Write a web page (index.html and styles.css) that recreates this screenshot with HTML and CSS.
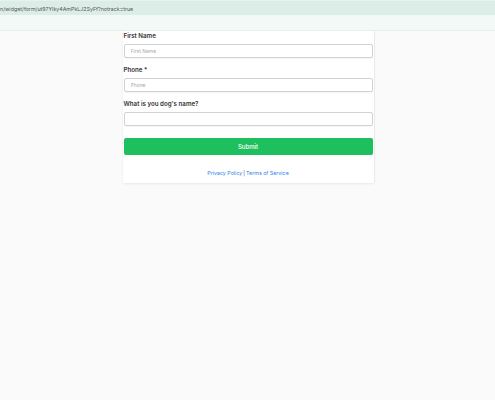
FILE: index.html
```html
<!DOCTYPE html>
<html lang="en">
<head>
    <meta charset="UTF-8">
    <meta name="viewport" content="width=device-width, initial-scale=1.0">
    <title>Form</title>
    <link rel="stylesheet" href="styles.css">
</head>
<body>

    <!-- Address bar -->
    <div class="url-bar">n/widget/form/ut97Ylky4AmPkLJ2SyFf?notrack=true</div>
    <div class="sub-bar"></div>

    <div class="page">
        <form class="card">
            <div class="form-group">
                <label for="firstName">First Name</label>
                <input type="text" id="firstName" placeholder="First Name">
            </div>

            <div class="form-group">
                <label for="phone">Phone *</label>
                <input type="text" id="phone" placeholder="Phone">
            </div>

            <div class="form-group">
                <label for="dogName">What is you dog's name?</label>
                <input type="text" id="dogName">
            </div>

            <button type="button" class="submit-btn">Submit</button>

            <div class="links">
                <a href="#">Privacy Policy</a><span class="sep">|</span><a href="#">Terms of Service</a>
            </div>
        </form>
    </div>

</body>
</html>
```

FILE: styles.css
```css
body {
    margin: 0;
    padding: 0;
    font-family: Inter, 'Noto Sans', sans-serif;
    background-color: #fafafa;
    min-height: 100vh;
}

/* Top bars */
.url-bar {
    height: 15px;
    line-height: 16px;
    background-color: #dcede8;
    border-top: 1px solid #e6f2ee;
    box-sizing: border-box;
    font-size: 5.3px;
    color: #555;
    white-space: nowrap;
    overflow: hidden;
}

.sub-bar {
    height: 15px;
    background-color: #f2f9f7;
    border-bottom: 1px solid #e8efed;
}

/* Card */
.page {
    display: flex;
    justify-content: center;
}

.card {
    width: 251px;
    margin-left: 1px;
    background-color: #fff;
    padding: 1px 1px 0 1px;
    box-sizing: border-box;
    box-shadow: 0 1px 2px rgba(0, 0, 0, 0.08), 1px 0 0 #f0f0f0;
    display: flex;
    flex-direction: column;
}

.form-group {
    display: flex;
    flex-direction: column;
    margin-bottom: 8px;
}

.form-group label {
    height: 8px;
    line-height: 8px;
    font-size: 6.2px;
    font-weight: 600;
    color: #333;
    margin-bottom: 4px;
}

.form-group input {
    height: 14px;
    box-sizing: border-box;
    border: 1px solid #d2d2d2;
    border-radius: 2px;
    padding: 0 6px;
    font-family: inherit;
    font-size: 5px;
    color: #333;
    background: #fff;
    box-shadow: 0 1px 1px rgba(0, 0, 0, 0.04);
    outline: none;
}

.form-group input::placeholder {
    color: #a8a8a8;
}

.submit-btn {
    margin-top: 4px;
    height: 17px;
    border: none;
    border-radius: 2px;
    background-color: #1dbf5e;
    color: #fff;
    font-family: inherit;
    font-size: 6px;
    font-weight: 500;
    cursor: pointer;
    padding: 0;
}

.links {
    text-align: center;
    font-size: 5.3px;
    padding: 14px 0 6px;
    line-height: 8px;
    color: #444;
}

.links a {
    color: #2f80ed;
    text-decoration: none;
}

.links .sep {
    margin: 0 1px;
}
```
